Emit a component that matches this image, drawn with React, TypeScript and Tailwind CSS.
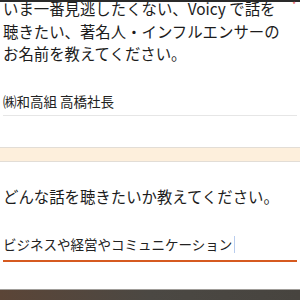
export default function App() {
  return (
    <div
      className="relative h-[300px] w-[300px] overflow-hidden bg-white text-[#1c1c1c]"
      style={{ fontFamily: '"Noto Sans CJK JP", "Noto Sans", sans-serif' }}
    >
      <div className="absolute left-0 right-0 top-0 h-[2px] bg-[#2a2a2a]" />
      <span className="absolute right-[4px] top-[1px] text-[8px] leading-[8px] text-[#e0494f]">*</span>

      <div className="pl-[3px] pr-[12px]">
        <p className="mt-[-3px] whitespace-nowrap text-[15.4px] leading-[22.5px]">
          いま一番見逃したくない、Voicy で話を
          <br />
          聴きたい、著名人・インフルエンサーの
          <br />
          お名前を教えてください。
        </p>
      </div>

      <div className="px-[3px]">
        <div className="mt-[26.5px] border-b border-[#e6e6e6] pb-[4px] text-[13.5px] leading-[20px] text-[#222]">
          ㈱和高組 高橋社長
        </div>
      </div>

      <div className="mt-[31px] h-[15px] border-y border-[#e2ddd6] bg-[#fdefdc]" />

      <div className="px-[3px]">
        <p className="mt-[22.75px] text-[15.4px] leading-[22.5px]">どんな話を聴きたいか教えてください。</p>

        <div className="mt-[26.75px] flex items-center border-b-2 border-[#d65a20] pb-[6px] text-[13.5px] leading-[20px] text-[#222]">
          <span>ビジネスや経営やコミュニケーション</span>
          <span className="ml-[2px] inline-block h-[17px] w-px bg-[#b9cdee]" />
        </div>
      </div>

      <div className="absolute bottom-0 left-0 right-0 h-[11px] border-t border-[#a09d99] bg-gradient-to-r from-[#5b4537] via-[#4b4843] to-[#47443f]" />
    </div>
  );
}
